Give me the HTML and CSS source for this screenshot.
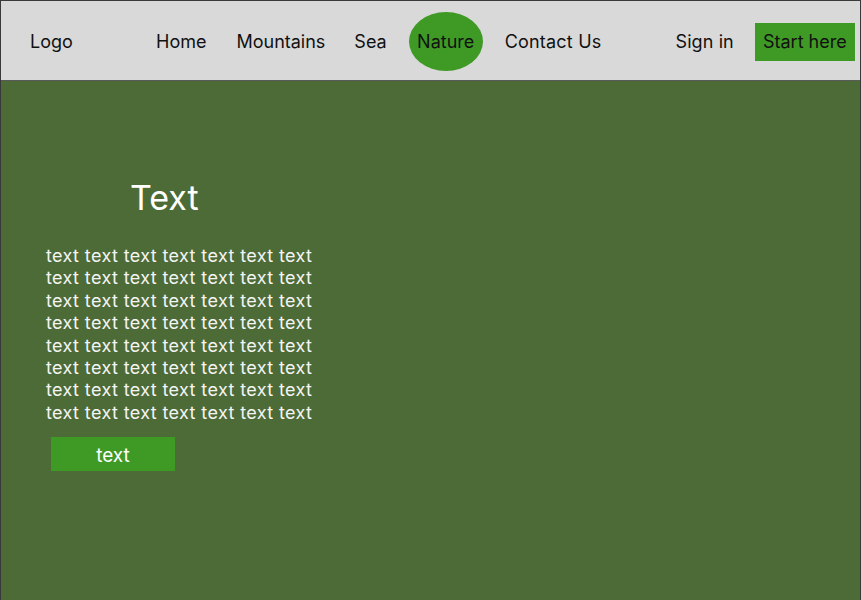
FILE: index.html
```html
<!DOCTYPE html>
<html>
<head>
<meta charset="utf-8">
<link rel="stylesheet" href="styles.css">
</head>
<body>
<div class="page">
  <header class="topbar">
    <div class="logo">Logo</div>
    <nav class="nav">
      <a class="nav-link home">Home</a>
      <a class="nav-link mountains">Mountains</a>
      <a class="nav-link sea">Sea</a>
      <a class="nav-link active">Nature</a>
      <a class="nav-link contact">Contact Us</a>
    </nav>
    <div class="actions">
      <a class="signin">Sign in</a>
      <a class="start">Start here</a>
    </div>
  </header>
  <main class="hero">
    <h1 class="title">Text</h1>
    <p class="body-text">text text text text text text text<br>text text text text text text text<br>text text text text text text text<br>text text text text text text text<br>text text text text text text text<br>text text text text text text text<br>text text text text text text text<br>text text text text text text text</p>
    <a class="cta">text</a>
  </main>
</div>
</body>
</html>
```
FILE: styles.css
```css
html, body {
  margin: 0;
  padding: 0;
  height: 100%;
}
body {
  font-family: Inter, "Noto Sans", sans-serif;
  background: #4c6b37;
}
.page {
  box-sizing: border-box;
  width: 861px;
  height: 600px;
  border: 1px solid #3a3a3a;
  border-bottom: none;
  display: flex;
  flex-direction: column;
  background: #4c6b37;
}
.topbar {
  height: 79px;
  flex-shrink: 0;
  background: #d9d9d9;
  border-bottom: 1px solid #5a5a5a;
  display: flex;
  align-items: center;
  font-size: 18px;
  color: #111;
  white-space: nowrap;
}
.topbar > * {
  flex-shrink: 0;
}
.logo {
  margin-left: 29px;
  width: 126px;
  padding-top: 2px;
}
.nav {
  display: flex;
  align-items: center;
}
.nav-link {
  flex-shrink: 0;
  padding-top: 2px;
}
.home {
  margin-right: 30px;
}
.mountains {
  margin-right: 29px;
}
.sea {
  margin-right: 22px;
}
.nav-link.active {
  width: 74px;
  height: 59px;
  padding-top: 0;
  border-radius: 50%;
  background: #3f9a25;
  display: flex;
  align-items: center;
  justify-content: center;
  margin-right: 22px;
  margin-top: 2px;
}
.contact {
  letter-spacing: 0.2px;
}
.actions {
  display: flex;
  align-items: center;
  margin-left: 74px;
}
.signin {
  margin-right: 21px;
  padding-top: 2px;
  letter-spacing: 0.1px;
}
.start {
  background: #3f9a25;
  height: 38px;
  width: 100px;
  flex-shrink: 0;
  display: flex;
  align-items: center;
  justify-content: center;
  margin-top: 2px;
}
.hero {
  flex: 1;
  display: flex;
  flex-direction: column;
  align-items: flex-start;
  padding-left: 45px;
  color: #f4f4f4;
}
.title {
  margin: 97px 0 0 84px;
  font-size: 34px;
  font-weight: 400;
  line-height: 40px;
  color: #fff;
}
.body-text {
  margin: 27px 0 0 0;
  font-size: 18px;
  letter-spacing: 0.38px;
  line-height: 22.4px;
  white-space: nowrap;
}
.cta {
  margin: 13px 0 0 5px;
  width: 124px;
  height: 34px;
  padding-top: 2px;
  box-sizing: border-box;
  background: #3f9a25;
  color: #fff;
  font-size: 19px;
  display: flex;
  align-items: center;
  justify-content: center;
}
```
